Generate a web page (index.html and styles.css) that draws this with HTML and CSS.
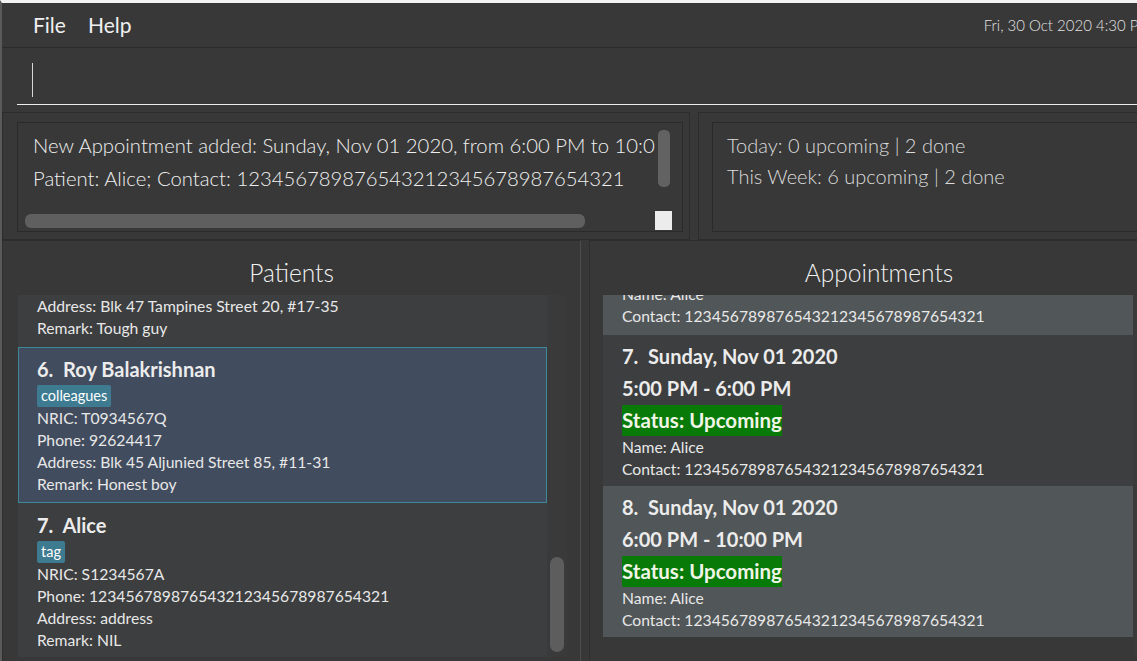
FILE: index.html
```html
<!DOCTYPE html>
<html lang="en">
<head>
<meta charset="utf-8">
<title>Clinic</title>
<link rel="stylesheet" href="styles.css">
</head>
<body>
<div class="app">
  <div class="menubar">
    <span class="menu">File</span>
    <span class="menu">Help</span>
    <span class="date">Fri, 30 Oct 2020 4:30 PM</span>
  </div>
  <div class="command">
    <div class="cmd-field"><span class="caret"></span></div>
  </div>
  <div class="info-row">
    <div class="result-pane">
      <div class="result-box">
        <div class="result-text">
          <p>New Appointment added: Sunday, Nov 01 2020, from 6:00 PM to 10:00 PM</p>
          <p>Patient: Alice; Contact: 12345678987654321234567898765432​1</p>
        </div>
        <div class="vscroll"><div class="vthumb"></div></div>
        <div class="hscroll"><div class="hthumb"></div></div>
        <div class="corner"></div>
      </div>
    </div>
    <div class="stats-pane">
      <div class="stats-box">
        <p>Today: 0 upcoming | 2 done</p>
        <p>This Week: 6 upcoming | 2 done</p>
      </div>
    </div>
  </div>
  <div class="lists">
    <section class="panel patients">
      <h2 class="panel-title">Patients</h2>
      <div class="list-wrap">
        <div class="list">
          <div class="pcard even partial">
            <div class="line">Address: Blk 47 Tampines Street 20, #17-35</div>
            <div class="line">Remark: Tough guy</div>
          </div>
          <div class="pcard selected">
            <div class="pname">6.&nbsp; Roy Balakrishnan</div>
            <div class="tags"><span class="tag">colleagues</span></div>
            <div class="line">NRIC: T0934567Q</div>
            <div class="line">Phone: 92624417</div>
            <div class="line">Address: Blk 45 Aljunied Street 85, #11-31</div>
            <div class="line">Remark: Honest boy</div>
          </div>
          <div class="pcard even">
            <div class="pname">7.&nbsp; Alice</div>
            <div class="tags"><span class="tag">tag</span></div>
            <div class="line">NRIC: S1234567A</div>
            <div class="line">Phone: 12345678987654321234567898765432​1</div>
            <div class="line">Address: address</div>
            <div class="line">Remark: NIL</div>
          </div>
        </div>
        <div class="track"><div class="pthumb"></div></div>
      </div>
    </section>
    <section class="panel appts">
      <h2 class="panel-title">Appointments</h2>
      <div class="list-wrap">
        <div class="list">
          <div class="acard odd partial">
            <div class="line">Name: Alice</div>
            <div class="line">Contact: 12345678987654321234567898765432​1</div>
          </div>
          <div class="acard even">
            <div class="atitle">7.&nbsp; Sunday, Nov 01 2020</div>
            <div class="atime">5:00 PM - 6:00 PM</div>
            <div class="status-row"><span class="status">Status: Upcoming</span></div>
            <div class="line">Name: Alice</div>
            <div class="line">Contact: 12345678987654321234567898765432​1</div>
          </div>
          <div class="acard odd">
            <div class="atitle">8.&nbsp; Sunday, Nov 01 2020</div>
            <div class="atime">6:00 PM - 10:00 PM</div>
            <div class="status-row"><span class="status">Status: Upcoming</span></div>
            <div class="line">Name: Alice</div>
            <div class="line">Contact: 12345678987654321234567898765432​1</div>
          </div>
        </div>
        <div class="track"></div>
      </div>
    </section>
  </div>
</div>
</body>
</html>
```

FILE: styles.css
```css
* { box-sizing: border-box; margin: 0; padding: 0; }
html, body { width: 1137px; height: 661px; overflow: hidden; background: #5a5a5a; }
body { font-family: "Lato", "Open Sans", sans-serif; color: #ffffff; }

.app {
  width: 1168px;
  height: 661px;
  background: #383838;
  border-left: 2px solid #5a5a5a;
  border-top: 3px solid #f2f2f2;
  display: flex;
  flex-direction: column;
}

/* menu bar */
.menubar {
  height: 45px;
  flex: none;
  border-bottom: 1px solid #2b2b2b;
  display: flex;
  align-items: center;
  padding: 0 16px 0 31px;
}
.menu { font-size: 21px; color: #f0f0f0; margin-right: 22px; font-weight: 400; line-height: 42px; }
.date { margin-left: auto; font-size: 15px; font-weight: 300; color: #e2e2e2; }

/* command box */
.command { height: 64px; flex: none; padding: 15px 0 0 15px; }
.cmd-field { height: 42px; border-bottom: 1px solid #ececec; padding-left: 15px; }
.caret { display: block; width: 1px; height: 34px; background: #d6d6d6; }

/* result + stats */
.info-row { height: 128px; flex: none; display: flex; }
.result-pane {
  width: 688px;
  border: 1px solid #2d2d2d;
  padding: 9px 6px 6px 14px;
}
.result-box {
  height: 110px;
  border: 1px solid #2a2a2a;
  display: grid;
  grid-template-columns: 1fr 18px;
  grid-template-rows: 1fr 20px;
  padding-right: 9px;
}
.result-text {
  overflow: hidden;
  white-space: nowrap;
  padding: 6px 0 0 15px;
  font-size: 20.3px;
  font-weight: 300;
  line-height: 33px;
  color: #f0f0f0;
}
.vscroll { padding: 7px 3px 0 3px; }
.vthumb { height: 57px; background: #626262; border-radius: 5px; }
.hscroll { padding: 3px 0 0 7px; }
.hthumb { width: 560px; height: 14px; background: #5f5f5f; border-radius: 6px; }
.corner { background: #ececec; margin: 0 1px 1px 0; }

.stats-pane {
  flex: 1;
  margin-left: 8px;
  border: 1px solid #2d2d2d;
  padding: 9px 14px 6px 13px;
}
.stats-box {
  height: 110px;
  border: 1px solid #2a2a2a;
  padding: 7px 14px 0 14px;
  font-size: 20px;
  font-weight: 300;
  line-height: 31px;
  color: #dcdcdc;
}

/* lists */
.lists { flex: 1; display: flex; min-height: 0; }
.panel {
  border-top: 1px solid #2d2d2d;
  display: flex;
  flex-direction: column;
  min-height: 0;
}
.patients { width: 579px; border-left: 1px solid #2f2f2f; border-right: 1px solid #4c4c4c; padding-left: 15px; }
.appts { flex: 1; margin-left: 8px; border-left: 1px solid #2e2e2e; padding-left: 13px; }
.panel-title {
  padding-top: 10px;
  height: 54px;
  line-height: 44px;
  text-align: center;
  font-size: 24.5px;
  font-weight: 300;
  color: #f2f2f2;
}
.patients .panel-title { margin-left: -15px; }
.appts .panel-title { margin-left: -13px; }

.list-wrap { display: flex; height: 362px; }
.list { width: 529px; overflow: hidden; background: #383838; }
.appts .list { width: 530px; }
.track { width: 20px; background: #3a3a3a; padding: 262px 3px 0 3px; }
.pthumb { height: 95px; background: #5d5d5d; border-radius: 7px; }

.line { height: 22px; line-height: 22px; font-size: 15.7px; color: #e8e8e8; white-space: nowrap; }

.pcard { border: 1px solid transparent; padding: 8px 18px 7px 18px; background: #3c3e3f; }
.pcard.partial { padding-top: 0; border-top: 0; }
.pcard.selected { background: #414c5e; border-color: #3c8898; }
.pname { height: 26px; line-height: 26px; font-size: 20px; font-weight: 700; color: #ececec; }
.tags { height: 22px; margin-top: 3px; }
.tag {
  display: inline-block;
  height: 22px;
  line-height: 22px;
  padding: 0 4px;
  background: #3e7b91;
  border-radius: 2px;
  font-size: 14.5px;
  color: #ffffff;
}

.acard { padding: 8px 19px 6px 19px; }
.acard.even { background: #3c3e3f; }
.acard.odd { background: #515658; }
.acard.partial { padding-top: 0; padding-bottom: 8px; margin-top: -12px; }
.atitle, .atime { height: 26px; line-height: 26px; font-size: 20px; font-weight: 700; color: #ececec; white-space: nowrap; }
.atime { margin-top: 6px; }
.status-row { height: 31px; margin-top: 4px; }
.status {
  display: inline-block;
  height: 31px;
  line-height: 31px;
  background: #077a07;
  font-size: 20.5px;
  font-weight: 700;
  color: #f0f5e6;
}
```
